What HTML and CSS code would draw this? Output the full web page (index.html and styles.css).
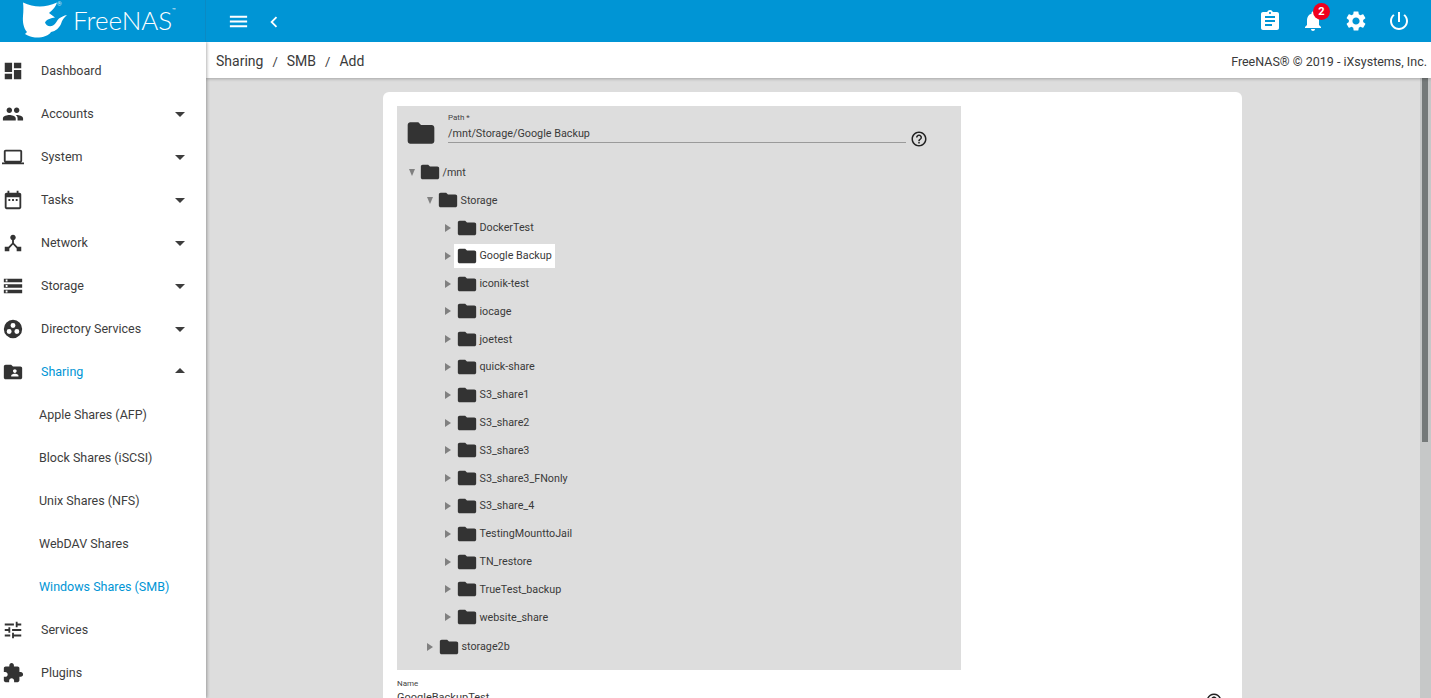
FILE: index.html
```html
<!DOCTYPE html>
<html lang="en">
<head>
<meta charset="utf-8">
<title>FreeNAS</title>
<link rel="stylesheet" href="styles.css">
</head>
<body>
<svg class="sprite" aria-hidden="true">
<symbol id="i-dashboard" viewBox="0 0 24 24"><path d="M3 13h8V3H3v10zm0 8h8v-6H3v6zm10 0h8V11h-8v10zm0-18v6h8V3h-8z"/></symbol>
<symbol id="i-people" viewBox="0 0 24 24"><path d="M16 11c1.66 0 2.99-1.34 2.99-3S17.66 5 16 5c-1.66 0-3 1.34-3 3s1.34 3 3 3zm-8 0c1.66 0 2.99-1.34 2.99-3S9.66 5 8 5C6.34 5 5 6.34 5 8s1.34 3 3 3zm0 2c-2.33 0-7 1.17-7 3.5V19h14v-2.5c0-2.33-4.67-3.5-7-3.5zm8 0c-.29 0-.62.02-.97.05 1.16.84 1.97 1.97 1.97 3.45V19h6v-2.5c0-2.33-4.67-3.5-7-3.5z"/></symbol>
<symbol id="i-laptop" viewBox="0 0 24 24"><path d="M20 18c1.1 0 1.99-.9 1.99-2L22 6c0-1.1-.9-2-2-2H4c-1.1 0-2 .9-2 2v10c0 1.1.9 2 2 2H0v2h24v-2h-4zM4 6h16v10H4V6z"/></symbol>
<symbol id="i-calendar" viewBox="0 0 24 24"><path d="M9 11H7v2h2v-2zm4 0h-2v2h2v-2zm4 0h-2v2h2v-2zm2-7h-1V2h-2v2H8V2H6v2H5c-1.11 0-1.99.9-1.99 2L3 20c0 1.1.89 2 2 2h14c1.1 0 2-.9 2-2V6c0-1.1-.9-2-2-2zm0 16H5V9h14v11z"/></symbol>
<symbol id="i-hub" viewBox="0 0 24 24"><path d="M17 16l-4-4V8.82C14.16 8.4 15 7.3 15 6c0-1.66-1.34-3-3-3S9 4.34 9 6c0 1.3.84 2.4 2 2.82V12l-4 4H3v5h5v-3.05l4-4.2 4 4.2V21h5v-5h-4z"/></symbol>
<symbol id="i-storage" viewBox="0 0 24 24"><path d="M2 20h20v-4H2v4zm2-3h2v2H4v-2zM2 4v4h20V4H2zm4 3H4V5h2v2zm-4 7h20v-4H2v4zm2-3h2v2H4v-2z"/></symbol>
<symbol id="i-directory" viewBox="0 0 24 24"><path fill-rule="evenodd" d="M12 2a10 10 0 1 0 0 20 10 10 0 0 0 0-20zm0 3.4a2.7 2.7 0 1 1 0 5.4 2.7 2.7 0 0 1 0-5.4zM7.8 12a2.7 2.7 0 1 1 0 5.4 2.7 2.7 0 0 1 0-5.4zm8.4 0a2.7 2.7 0 1 1 0 5.4 2.7 2.7 0 0 1 0-5.4z"/></symbol>
<symbol id="i-share" viewBox="0 0 24 24"><path d="M20 6h-8l-2-2H4c-1.1 0-1.99.9-1.99 2L2 18c0 1.1.9 2 2 2h16c1.1 0 2-.9 2-2V8c0-1.1-.9-2-2-2zm-6 3c1.1 0 2 .9 2 2s-.9 2-2 2-2-.9-2-2 .9-2 2-2zm4 8h-8v-1c0-1.33 2.67-2 4-2s4 .67 4 2v1z"/></symbol>
<symbol id="i-tune" viewBox="0 0 24 24"><path d="M3 17v2h6v-2H3zM3 5v2h10V5H3zm10 16v-2h8v-2h-8v-2h-2v6h2zM7 9v2H3v2h4v2h2V9H7zm14 4v-2H11v2h10zm-6-4h2V7h4V5h-4V3h-2v6z"/></symbol>
<symbol id="i-plugin" viewBox="0 0 24 24"><path d="M20.5 11H19V7c0-1.1-.9-2-2-2h-4V3.5C13 2.12 11.88 1 10.5 1S8 2.12 8 3.5V5H4c-1.1 0-1.99.9-1.99 2v3.8H3.5c1.49 0 2.7 1.21 2.7 2.7s-1.21 2.7-2.7 2.7H2V20c0 1.1.9 2 2 2h3.8v-1.5c0-1.49 1.21-2.7 2.7-2.7 1.49 0 2.7 1.21 2.7 2.7V22H17c1.1 0 2-.9 2-2v-4h1.5c1.38 0 2.5-1.12 2.5-2.5S21.88 11 20.5 11z"/></symbol>
<symbol id="i-assignment" viewBox="0 0 24 24"><path d="M19 3h-4.18C14.4 1.84 13.3 1 12 1c-1.3 0-2.4.84-2.82 2H5c-1.1 0-2 .9-2 2v14c0 1.1.9 2 2 2h14c1.1 0 2-.9 2-2V5c0-1.1-.9-2-2-2zm-7 0c.55 0 1 .45 1 1s-.45 1-1 1-1-.45-1-1 .45-1 1-1zm2 14H7v-2h7v2zm3-4H7v-2h10v2zm0-4H7V7h10v2z"/></symbol>
<symbol id="i-bell" viewBox="0 0 24 24"><path d="M12 22c1.1 0 2-.9 2-2h-4c0 1.1.89 2 2 2zm6-6v-5c0-3.07-1.64-5.64-4.5-6.32V4c0-.83-.67-1.5-1.5-1.5s-1.5.67-1.5 1.5v.68C7.63 5.36 6 7.92 6 11v5l-2 2v1h16v-1l-2-2z"/></symbol>
<symbol id="i-settings" viewBox="0 0 24 24"><path d="M19.14 12.94c.04-.3.06-.61.06-.94 0-.32-.02-.64-.07-.94l2.03-1.58c.18-.14.23-.41.12-.61l-1.92-3.32c-.12-.22-.37-.29-.59-.22l-2.39.96c-.5-.38-1.03-.7-1.62-.94l-.36-2.54c-.04-.24-.24-.41-.48-.41h-3.84c-.24 0-.43.17-.47.41l-.36 2.54c-.59.24-1.13.57-1.62.94l-2.39-.96c-.22-.08-.47 0-.59.22L2.74 8.87c-.12.21-.08.47.12.61l2.03 1.58c-.05.3-.09.63-.09.94s.02.64.07.94l-2.03 1.58c-.18.14-.23.41-.12.61l1.92 3.32c.12.22.37.29.59.22l2.39-.96c.5.38 1.03.7 1.62.94l.36 2.54c.05.24.24.41.48.41h3.84c.24 0 .44-.17.47-.41l.36-2.54c.59-.24 1.13-.56 1.62-.94l2.39.96c.22.08.47 0 .59-.22l1.92-3.32c.12-.22.07-.47-.12-.61l-2.01-1.58zM12 15.6c-1.98 0-3.6-1.62-3.6-3.6s1.62-3.6 3.6-3.6 3.6 1.62 3.6 3.6-1.62 3.6-3.6 3.6z"/></symbol>
<symbol id="i-power" viewBox="0 0 24 24"><path d="M13 3h-2v10h2V3zm4.83 2.17l-1.42 1.42C17.99 7.86 19 9.81 19 12c0 3.87-3.13 7-7 7s-7-3.13-7-7c0-2.19 1.01-4.14 2.58-5.42L6.17 5.17C4.23 6.82 3 9.26 3 12c0 4.97 4.03 9 9 9s9-4.03 9-9c0-2.74-1.23-5.18-3.17-6.83z"/></symbol>
<symbol id="i-menu" viewBox="0 0 24 24"><path d="M3 18h18v-2H3v2zm0-5h18v-2H3v2zm0-7v2h18V6H3z"/></symbol>
<symbol id="i-back" viewBox="0 0 24 24"><path d="M15.41 7.41L14 6l-6 6 6 6 1.41-1.41L10.83 12z"/></symbol>
<symbol id="i-help" viewBox="0 0 24 24"><path d="M11 18h2v-2h-2v2zm1-16C6.48 2 2 6.48 2 12s4.48 10 10 10 10-4.48 10-10S17.52 2 12 2zm0 18c-4.41 0-8-3.59-8-8s3.59-8 8-8 8 3.59 8 8-3.59 8-8 8zm0-14c-2.21 0-4 1.79-4 4h2c0-1.1.9-2 2-2s2 .9 2 2c0 2-3 1.75-3 5h2c0-2.25 3-2.5 3-5 0-2.21-1.79-4-4-4z"/></symbol>
<symbol id="i-folder" viewBox="0 0 24 24"><path d="M10 4H4c-1.1 0-1.99.9-1.99 2L2 18c0 1.1.9 2 2 2h16c1.1 0 2-.9 2-2V8c0-1.1-.9-2-2-2h-8l-2-2z"/></symbol>
</svg>

<header class="topbar">
  <div class="brand">
    <svg class="shark" viewBox="0 0 50 42"><path d="M3 2.500C9 5 14 6.500 20 6.500C25 6.500 31 5 37 2.500C36 6 33 10 29 13L35 17.500C31 18 27 19 25 22.500C26 26 30 27 33 25.500C36 24 37 20 39 18.500C41 17 44 15.500 47 15C44 17.500 42 20 41 24C39 28 36 31 31 32C29 35.500 22 38 15 37.500C11 37 8 36 5 34L7 32C3.500 28 2.500 22 3 16C3.500 11 3.500 6 3 2.500Z"/></svg>
    <span class="reg">®</span>
    <span class="wordmark">FreeNAS</span><span class="tm">™</span>
  </div>
  <div class="top-actions">
    <div class="top-left">
      <svg class="icon tb-menu"><use href="#i-menu"/></svg>
      <svg class="icon tb-back"><use href="#i-back"/></svg>
    </div>
    <div class="top-right">
      <svg class="icon tb-icon"><use href="#i-assignment"/></svg>
      <span class="bell"><svg class="icon tb-icon"><use href="#i-bell"/></svg><span class="badge">2</span></span>
      <svg class="icon tb-icon"><use href="#i-settings"/></svg>
      <svg class="icon tb-icon"><use href="#i-power"/></svg>
    </div>
  </div>
</header>

<div class="shell">
  <nav class="sidebar">
    <a class="nav-row"><svg class="icon nav-icon"><use href="#i-dashboard"/></svg><span>Dashboard</span></a>
    <a class="nav-row"><svg class="icon nav-icon"><use href="#i-people"/></svg><span>Accounts</span><i class="caret"></i></a>
    <a class="nav-row"><svg class="icon nav-icon"><use href="#i-laptop"/></svg><span>System</span><i class="caret"></i></a>
    <a class="nav-row"><svg class="icon nav-icon"><use href="#i-calendar"/></svg><span>Tasks</span><i class="caret"></i></a>
    <a class="nav-row"><svg class="icon nav-icon"><use href="#i-hub"/></svg><span>Network</span><i class="caret"></i></a>
    <a class="nav-row"><svg class="icon nav-icon"><use href="#i-storage"/></svg><span>Storage</span><i class="caret"></i></a>
    <a class="nav-row"><svg class="icon nav-icon"><use href="#i-directory"/></svg><span>Directory Services</span><i class="caret"></i></a>
    <a class="nav-row active"><svg class="icon nav-icon"><use href="#i-share"/></svg><span>Sharing</span><i class="caret up"></i></a>
    <a class="nav-row sub">Apple Shares (AFP)</a>
    <a class="nav-row sub">Block Shares (iSCSI)</a>
    <a class="nav-row sub">Unix Shares (NFS)</a>
    <a class="nav-row sub">WebDAV Shares</a>
    <a class="nav-row sub active">Windows Shares (SMB)</a>
    <a class="nav-row"><svg class="icon nav-icon"><use href="#i-tune"/></svg><span>Services</span></a>
    <a class="nav-row"><svg class="icon nav-icon"><use href="#i-plugin"/></svg><span>Plugins</span></a>
  </nav>

  <div class="workspace">
    <div class="crumbbar">
      <div class="crumbs"><span>Sharing</span><i>/</i><span>SMB</span><i>/</i><span>Add</span></div>
      <div class="copyright">FreeNAS® © 2019 - iXsystems, Inc.</div>
    </div>
    <div class="content-wrap">
      <main class="content">
        <section class="card">
          <div class="explorer">
            <div class="path-row">
              <svg class="icon path-folder"><use href="#i-folder"/></svg>
              <div class="path-field">
                <label class="small-label">Path *</label>
                <div class="path-value">/mnt/Storage/Google Backup</div>
              </div>
              <svg class="icon help"><use href="#i-help"/></svg>
            </div>
            <div class="tree">
              <div class="node"><i class="arrow down"></i><svg class="icon folder"><use href="#i-folder"/></svg><span>/mnt</span></div>
              <div class="children">
                <div class="node"><i class="arrow down"></i><svg class="icon folder"><use href="#i-folder"/></svg><span>Storage</span></div>
                <div class="children">
                  <div class="node"><i class="arrow"></i><svg class="icon folder"><use href="#i-folder"/></svg><span>DockerTest</span></div>
                  <div class="node selected"><i class="arrow"></i><svg class="icon folder"><use href="#i-folder"/></svg><span>Google Backup</span></div>
                  <div class="node"><i class="arrow"></i><svg class="icon folder"><use href="#i-folder"/></svg><span>iconik-test</span></div>
                  <div class="node"><i class="arrow"></i><svg class="icon folder"><use href="#i-folder"/></svg><span>iocage</span></div>
                  <div class="node"><i class="arrow"></i><svg class="icon folder"><use href="#i-folder"/></svg><span>joetest</span></div>
                  <div class="node"><i class="arrow"></i><svg class="icon folder"><use href="#i-folder"/></svg><span>quick-share</span></div>
                  <div class="node"><i class="arrow"></i><svg class="icon folder"><use href="#i-folder"/></svg><span>S3_share1</span></div>
                  <div class="node"><i class="arrow"></i><svg class="icon folder"><use href="#i-folder"/></svg><span>S3_share2</span></div>
                  <div class="node"><i class="arrow"></i><svg class="icon folder"><use href="#i-folder"/></svg><span>S3_share3</span></div>
                  <div class="node"><i class="arrow"></i><svg class="icon folder"><use href="#i-folder"/></svg><span>S3_share3_FNonly</span></div>
                  <div class="node"><i class="arrow"></i><svg class="icon folder"><use href="#i-folder"/></svg><span>S3_share_4</span></div>
                  <div class="node"><i class="arrow"></i><svg class="icon folder"><use href="#i-folder"/></svg><span>TestingMounttoJail</span></div>
                  <div class="node"><i class="arrow"></i><svg class="icon folder"><use href="#i-folder"/></svg><span>TN_restore</span></div>
                  <div class="node"><i class="arrow"></i><svg class="icon folder"><use href="#i-folder"/></svg><span>TrueTest_backup</span></div>
                  <div class="node"><i class="arrow"></i><svg class="icon folder"><use href="#i-folder"/></svg><span>website_share</span></div>
                </div>
                <div class="node"><i class="arrow"></i><svg class="icon folder"><use href="#i-folder"/></svg><span>storage2b</span></div>
              </div>
            </div>
          </div>
          <div class="name-row">
            <div class="name-field">
              <label class="small-label">Name</label>
              <div class="name-value">GoogleBackupTest</div>
            </div>
            <svg class="icon help"><use href="#i-help"/></svg>
          </div>
        </section>
      </main>
      <div class="scrollbar"><div class="thumb"></div></div>
    </div>
  </div>
</div>
</body>
</html>
```

FILE: styles.css
```css
* { box-sizing: border-box; }
html, body { margin: 0; height: 100%; overflow: hidden; }
body {
  font-family: Roboto, "Liberation Sans", sans-serif;
  color: #3a3a3a;
  display: flex;
  flex-direction: column;
  background: #ddd;
}
.sprite { display: none; }
.icon { display: block; fill: currentColor; flex: none; }

.topbar {
  height: 42px;
  flex: none;
  display: flex;
  background: #0095d5;
  color: #fff;
  position: relative;
  z-index: 3;
}
.brand {
  width: 206px;
  flex: none;
  display: flex;
  align-items: flex-start;
  padding-left: 20px;
  border-right: 1px solid #0a8ac4;
  position: relative;
}
.shark { width: 50px; height: 42px; flex: none; fill: #fff; }
.reg { position: absolute; left: 57px; top: 0; font-size: 6px; line-height: 8px; color: #cfeaf7; }
.wordmark {
  font-family: Lato, Roboto, sans-serif;
  font-weight: 300;
  font-size: 26px;
  line-height: 41px;
  margin-left: 3px;
}
.tm { font-size: 6px; line-height: 20px; }
.top-actions {
  flex: 1;
  display: flex;
  justify-content: space-between;
  align-items: center;
}
.top-left { display: flex; align-items: center; padding: 1px 0 0 21px; gap: 13px; }
.tb-menu { width: 23px; height: 23px; }
.tb-back { width: 22px; height: 22px; }
.top-right { display: flex; align-items: center; gap: 19px; padding-right: 20px; }
.tb-icon { width: 24px; height: 24px; }
.bell { position: relative; display: block; }
.badge {
  position: absolute;
  top: -6px;
  left: 12px;
  width: 17px;
  height: 17px;
  border-radius: 50%;
  background: #f0001e;
  color: #fff;
  font-size: 11px;
  font-weight: 700;
  line-height: 17px;
  text-align: center;
}

.shell { flex: 1; display: flex; min-height: 0; }
.sidebar {
  width: 206px;
  flex: none;
  background: #fff;
  padding-top: 7px;
  overflow: hidden;
  box-shadow: 1px 0 3px rgba(0, 0, 0, .3);
  position: relative;
  z-index: 2;
}
.nav-row {
  height: 43px;
  display: flex;
  align-items: center;
  font-size: 12.5px;
  color: #3d3d3d;
  position: relative;
}
.nav-row.sub { padding-left: 39px; }
.nav-row.active { color: #0095d5; }
.nav-icon { width: 22px; height: 22px; margin-left: 1.5px; margin-right: 17.5px; color: #333; }
.caret {
  position: absolute;
  left: 175px;
  top: 20px;
  border-left: 5px solid transparent;
  border-right: 5px solid transparent;
  border-top: 5px solid #3d3d3d;
}
.caret.up { border-top: 0; border-bottom: 5px solid #3d3d3d; top: 18px; }

.workspace { flex: 1; min-width: 0; display: flex; flex-direction: column; }
.crumbbar {
  height: 36px;
  flex: none;
  background: #fff;
  display: flex;
  align-items: center;
  justify-content: space-between;
  padding: 2px 4px 0 10px;
  box-shadow: 0 1px 3px rgba(0, 0, 0, .25);
  position: relative;
  z-index: 1;
}
.crumbs { display: flex; align-items: center; font-size: 14px; }
.crumbs i { font-style: normal; font-size: 13px; margin: 0 9px; }
.copyright { font-size: 12.5px; }
.content-wrap { flex: 1; min-height: 0; display: flex; }
.content { flex: 1; min-width: 0; padding: 14px 177px 0 177px; overflow: hidden; }
.card {
  background: #fff;
  border-radius: 6px 6px 0 0;
  padding: 14px 14px 0;
  height: 700px;
}
.explorer { width: 564px; height: 564px; background: #ddd; padding-top: 7px; }
.path-row { display: flex; align-items: flex-start; padding-left: 8px; }
.path-folder { width: 32px; height: 32px; margin-top: 4px; color: #333; }
.path-field { width: 458px; margin-left: 11px; border-bottom: 1px solid #9a9a9a; height: 30px; }
.small-label { display: block; font-size: 8px; line-height: 9px; color: #444; }
.path-value { font-size: 10.8px; line-height: 16px; margin-top: 4px; }
.help { width: 18px; height: 18px; margin: 17px 0 0 4px; color: #222; }

.tree { padding: 9.5px 0 0 12px; font-size: 10.75px; }
.children { padding-left: 18px; }
.children > .children + .node { margin-top: 2px; }
.node { height: 27.8px; display: flex; align-items: center; position: relative; }
.node > * { position: relative; }
.arrow {
  width: 0;
  height: 0;
  flex: none;
  margin-right: 5px;
  border-top: 4px solid transparent;
  border-bottom: 4px solid transparent;
  border-left: 6px solid #808080;
}
.arrow.down {
  border-left: 3.5px solid transparent;
  border-right: 3.5px solid transparent;
  border-top: 7px solid #808080;
  border-bottom: 0;
  margin-right: 4px;
}
.folder { width: 22px; height: 22px; color: #333; margin-right: 1.5px; }
.node.selected::before {
  content: "";
  position: absolute;
  left: 9px;
  top: 2px;
  width: 101px;
  height: 24px;
  background: #fff;
}
.name-row { display: flex; align-items: flex-start; justify-content: space-between; padding-top: 9px; }
.name-field { flex: 1; }
.name-value { font-size: 11px; line-height: 16px; margin-top: 2px; }
.name-row .help { margin: 13px 5px 0 0; }

.scrollbar { width: 11px; flex: none; background: #c6c8c8; padding-left: 2px; margin-left: 1px; }
.thumb { height: 364px; width: 6px; background: #757a7a; }
```
